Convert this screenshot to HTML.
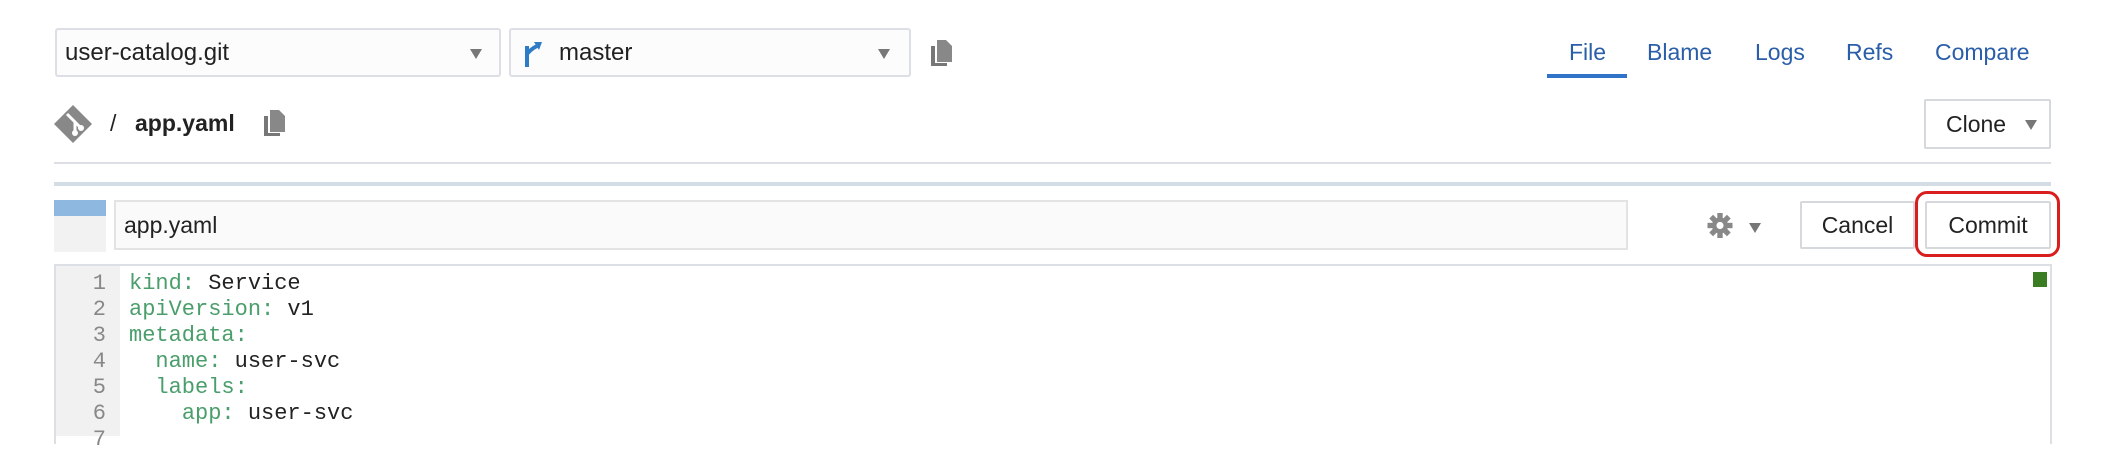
<!DOCTYPE html>
<html><head><meta charset="utf-8"><style>
body{margin:0;width:2102px;height:432px;background:#fff;position:relative;overflow:hidden;font-family:"Liberation Sans",sans-serif;color:#222}
.a{position:absolute;box-sizing:border-box}
.sel{border:2px solid #dcdfe3;background:#fcfcfd;border-radius:3px;font-size:24px;line-height:45px;padding-left:8px}
.caret{position:absolute;width:0;height:0;border-left:6px solid transparent;border-right:6px solid transparent;border-top:10px solid #777}
.tab{position:absolute;top:39px;font-size:23px;color:#2a5ea8}
.btn{border:2px solid #d5d8dc;background:#fff;font-size:23px;text-align:center;border-radius:2px}
.code{font-family:"Liberation Mono",monospace;font-size:22px;line-height:26px;white-space:pre}
.k{color:#4a9e6b}
</style></head><body>
<div class="a sel" style="left:55px;top:28px;width:446px;height:49px">user-catalog.git<span class="caret" style="left:413px;top:19px"></span></div>
<div class="a sel" style="left:509px;top:28px;width:402px;height:49px;padding-left:48px">master<span class="caret" style="left:367px;top:19px"></span>
<svg style="position:absolute;left:12px;top:10px" width="22" height="28" viewBox="0 0 22 28"><path d="M4 27 L4 6 M4 14 Q8 9 14 6" stroke="#2f7cc6" stroke-width="4" fill="none"/><path d="M11 2 L19 2 L16 10 Z" fill="#2f7cc6"/></svg></div>
<svg class="a" style="left:929px;top:40px" width="24" height="27" viewBox="0 0 24 27"><path d="M2 6 h4 v17 h12 v3 H2z" fill="#777"/><path d="M8 0 h9 l6 6 v16 H8z" fill="#888"/></svg>
<div class="tab" style="left:1569px">File</div>
<div class="a" style="left:1547px;top:74px;width:80px;height:4px;background:#2f74c8"></div>
<div class="tab" style="left:1647px">Blame</div>
<div class="tab" style="left:1755px">Logs</div>
<div class="tab" style="left:1846px">Refs</div>
<div class="tab" style="left:1935px">Compare</div>
<svg class="a" style="left:53px;top:104px" width="40" height="40" viewBox="0 0 40 40"><path d="M20 1 L39 20 L20 39 L1 20 Z" fill="#888"/><path d="M14 10 L22 18 L22 29 M22 18 L28 24" stroke="#fff" stroke-width="3" fill="none"/><circle cx="22" cy="29" r="3" fill="#fff"/><circle cx="28" cy="24" r="3" fill="#fff"/></svg>
<div class="a" style="left:110px;top:110px;font-size:23px">/</div>
<div class="a" style="left:135px;top:110px;font-size:23px;font-weight:bold">app.yaml</div>
<svg class="a" style="left:262px;top:110px" width="24" height="27" viewBox="0 0 24 27"><path d="M2 6 h4 v17 h12 v3 H2z" fill="#777"/><path d="M8 0 h9 l6 6 v16 H8z" fill="#888"/></svg>
<div class="a btn" style="left:1924px;top:99px;width:127px;height:50px;line-height:46px;text-align:left;padding-left:20px">Clone<span class="caret" style="left:99px;top:19px"></span></div>
<div class="a" style="left:54px;top:162px;width:1997px;height:2px;background:#dcdfe3"></div>
<div class="a" style="left:54px;top:182px;width:1997px;height:4px;background:#d5dde4"></div>
<div class="a" style="left:54px;top:200px;width:52px;height:52px;background:#f2f2f2"></div>
<div class="a" style="left:54px;top:200px;width:52px;height:16px;background:#8fb8e0"></div>
<div class="a" style="left:114px;top:200px;width:1514px;height:50px;border:2px solid #e3e3e3;background:#fafafa;font-size:23px;line-height:46px;padding-left:8px">app.yaml</div>
<svg class="a" style="left:1706px;top:213px" width="28" height="25" viewBox="0 0 28 28"><g fill="#888"><circle cx="14" cy="14" r="9"/><rect x="11" y="0" width="6" height="28"/><rect x="0" y="11" width="28" height="6"/><rect x="11" y="0" width="6" height="28" transform="rotate(45 14 14)"/><rect x="11" y="0" width="6" height="28" transform="rotate(-45 14 14)"/></g><circle cx="14" cy="14" r="4" fill="#fff"/></svg>
<span class="caret" style="left:1749px;top:223px"></span>
<div class="a btn" style="left:1800px;top:201px;width:115px;height:48px;line-height:44px">Cancel</div>
<div class="a btn" style="left:1925px;top:201px;width:126px;height:48px;line-height:44px">Commit</div>
<div class="a" style="left:1915px;top:191px;width:145px;height:66px;border:3px solid #d81e1e;border-radius:12px"></div>
<div class="a" style="left:54px;top:264px;width:1998px;height:180px;border:2px solid #dcdfe3;border-bottom:none"></div>
<div class="a" style="left:56px;top:266px;width:64px;height:170px;background:#f1f1f1"></div>
<div class="a code" style="left:56px;top:271px;width:50px;text-align:right;color:#888">1
2
3
4
5
6
7</div>
<div class="a code" style="left:129px;top:271px"><span class="k">kind:</span> Service
<span class="k">apiVersion:</span> v1
<span class="k">metadata:</span>
  <span class="k">name:</span> user-svc
  <span class="k">labels:</span>
    <span class="k">app:</span> user-svc</div>
<div class="a" style="left:2033px;top:272px;width:14px;height:15px;background:#3b7d23"></div>
</body></html>
